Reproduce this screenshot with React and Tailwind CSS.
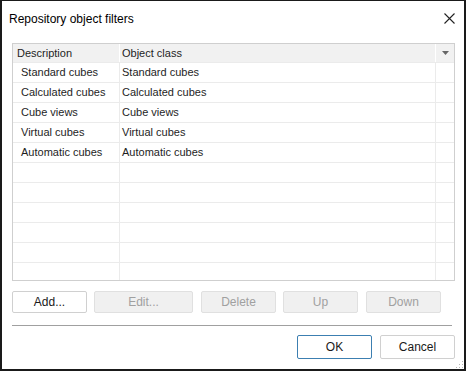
import React from 'react'

const rows = [
  ['Standard cubes', 'Standard cubes'],
  ['Calculated cubes', 'Calculated cubes'],
  ['Cube views', 'Cube views'],
  ['Virtual cubes', 'Virtual cubes'],
  ['Automatic cubes', 'Automatic cubes'],
  ['', ''],
  ['', ''],
  ['', ''],
  ['', ''],
  ['', ''],
]

function Btn({ children, disabled, primary, className = '' }) {
  const base = 'rounded-[2px] border text-[12px] flex items-center justify-center'
  const look = disabled
    ? 'bg-[#f0f0f0] border-[#e0e0e0] text-[#a0a0a0]'
    : primary
      ? 'bg-white border-[#3c7fb1] text-[#1a1a1a]'
      : 'bg-white border-[#d0d0d0] text-[#1a1a1a]'
  return <div className={`${base} ${look} ${className}`}>{children}</div>
}

export default function App() {
  return (
    <div
      className="w-[466px] h-[371px] bg-white border-2 border-t border-[#1a1a1a] relative flex flex-col"
      style={{ fontFamily: '"Liberation Sans", Arial, sans-serif' }}
    >
      {/* Title */}
      <div className="h-[34px] flex items-center justify-between pl-[7px] pr-[9px] pt-[1px]">
        <span className="text-[12px] text-black">Repository object filters</span>
        <svg width="11" height="11" viewBox="0 0 11 11">
          <path d="M0.5 0.5 L10.5 10.5 M10.5 0.5 L0.5 10.5" stroke="#222" strokeWidth="1.1" />
        </svg>
      </div>

      {/* Grid */}
      <div className="ml-[10px] mt-[8px] w-[443px] h-[238px] border border-[#cfcfcf] overflow-hidden text-[11px] text-[#1e1e1e]">
        <div className="flex h-[18px] bg-[#f1f1f1]">
          <div className="w-[107px] pl-[4px] flex items-center border-r border-white">Description</div>
          <div className="w-[316px] pl-[2px] flex items-center border-r border-white">Object class</div>
          <div className="flex-1 flex items-center justify-center">
            <svg width="7" height="4" viewBox="0 0 7 4">
              <path d="M0 0 H7 L3.5 4 Z" fill="#666" />
            </svg>
          </div>
        </div>
        {rows.map((r, i) => (
          <div key={i} className="flex h-[20px] border-t border-[#ebebeb]">
            <div className="w-[107px] pl-[8px] flex items-center border-r border-[#ebebeb]">{r[0]}</div>
            <div className="w-[316px] pl-[2px] flex items-center border-r border-[#ebebeb]">{r[1]}</div>
            <div className="flex-1" />
          </div>
        ))}
        <div className="flex h-[20px] border-t border-[#ebebeb]">
          <div className="w-[107px] border-r border-[#ebebeb]" />
          <div className="w-[316px] border-r border-[#ebebeb]" />
          <div className="flex-1" />
        </div>
      </div>

      {/* Row buttons */}
      <div className="flex ml-[10px] mt-[10px] h-[22px]">
        <Btn className="w-[75px]">Add...</Btn>
        <Btn disabled className="w-[99px] ml-[7px]">Edit...</Btn>
        <Btn disabled className="w-[75px] ml-[8px]">Delete</Btn>
        <Btn disabled className="w-[75px] ml-[7px]">Up</Btn>
        <Btn disabled className="w-[75px] ml-[8px]">Down</Btn>
      </div>

      <div className="ml-[10px] mt-[12px] w-[440px] h-px bg-[#a0a0a0]" />

      {/* Dialog buttons */}
      <div className="flex justify-end gap-[8px] mt-[9px] mr-[9px] h-[24px]">
        <Btn primary className="w-[75px]">OK</Btn>
        <Btn className="w-[75px]">Cancel</Btn>
      </div>

      {/* Resize grip */}
      <svg width="9" height="9" viewBox="0 0 9 9" className="absolute right-[0px] bottom-[0px]">
        <g fill="#b5b5b5">
          <rect x="7" y="1" width="1" height="1" />
          <rect x="4" y="4" width="1" height="1" />
          <rect x="7" y="4" width="1" height="1" />
          <rect x="1" y="7" width="1" height="1" />
          <rect x="4" y="7" width="1" height="1" />
          <rect x="7" y="7" width="1" height="1" />
        </g>
      </svg>
    </div>
  )
}
